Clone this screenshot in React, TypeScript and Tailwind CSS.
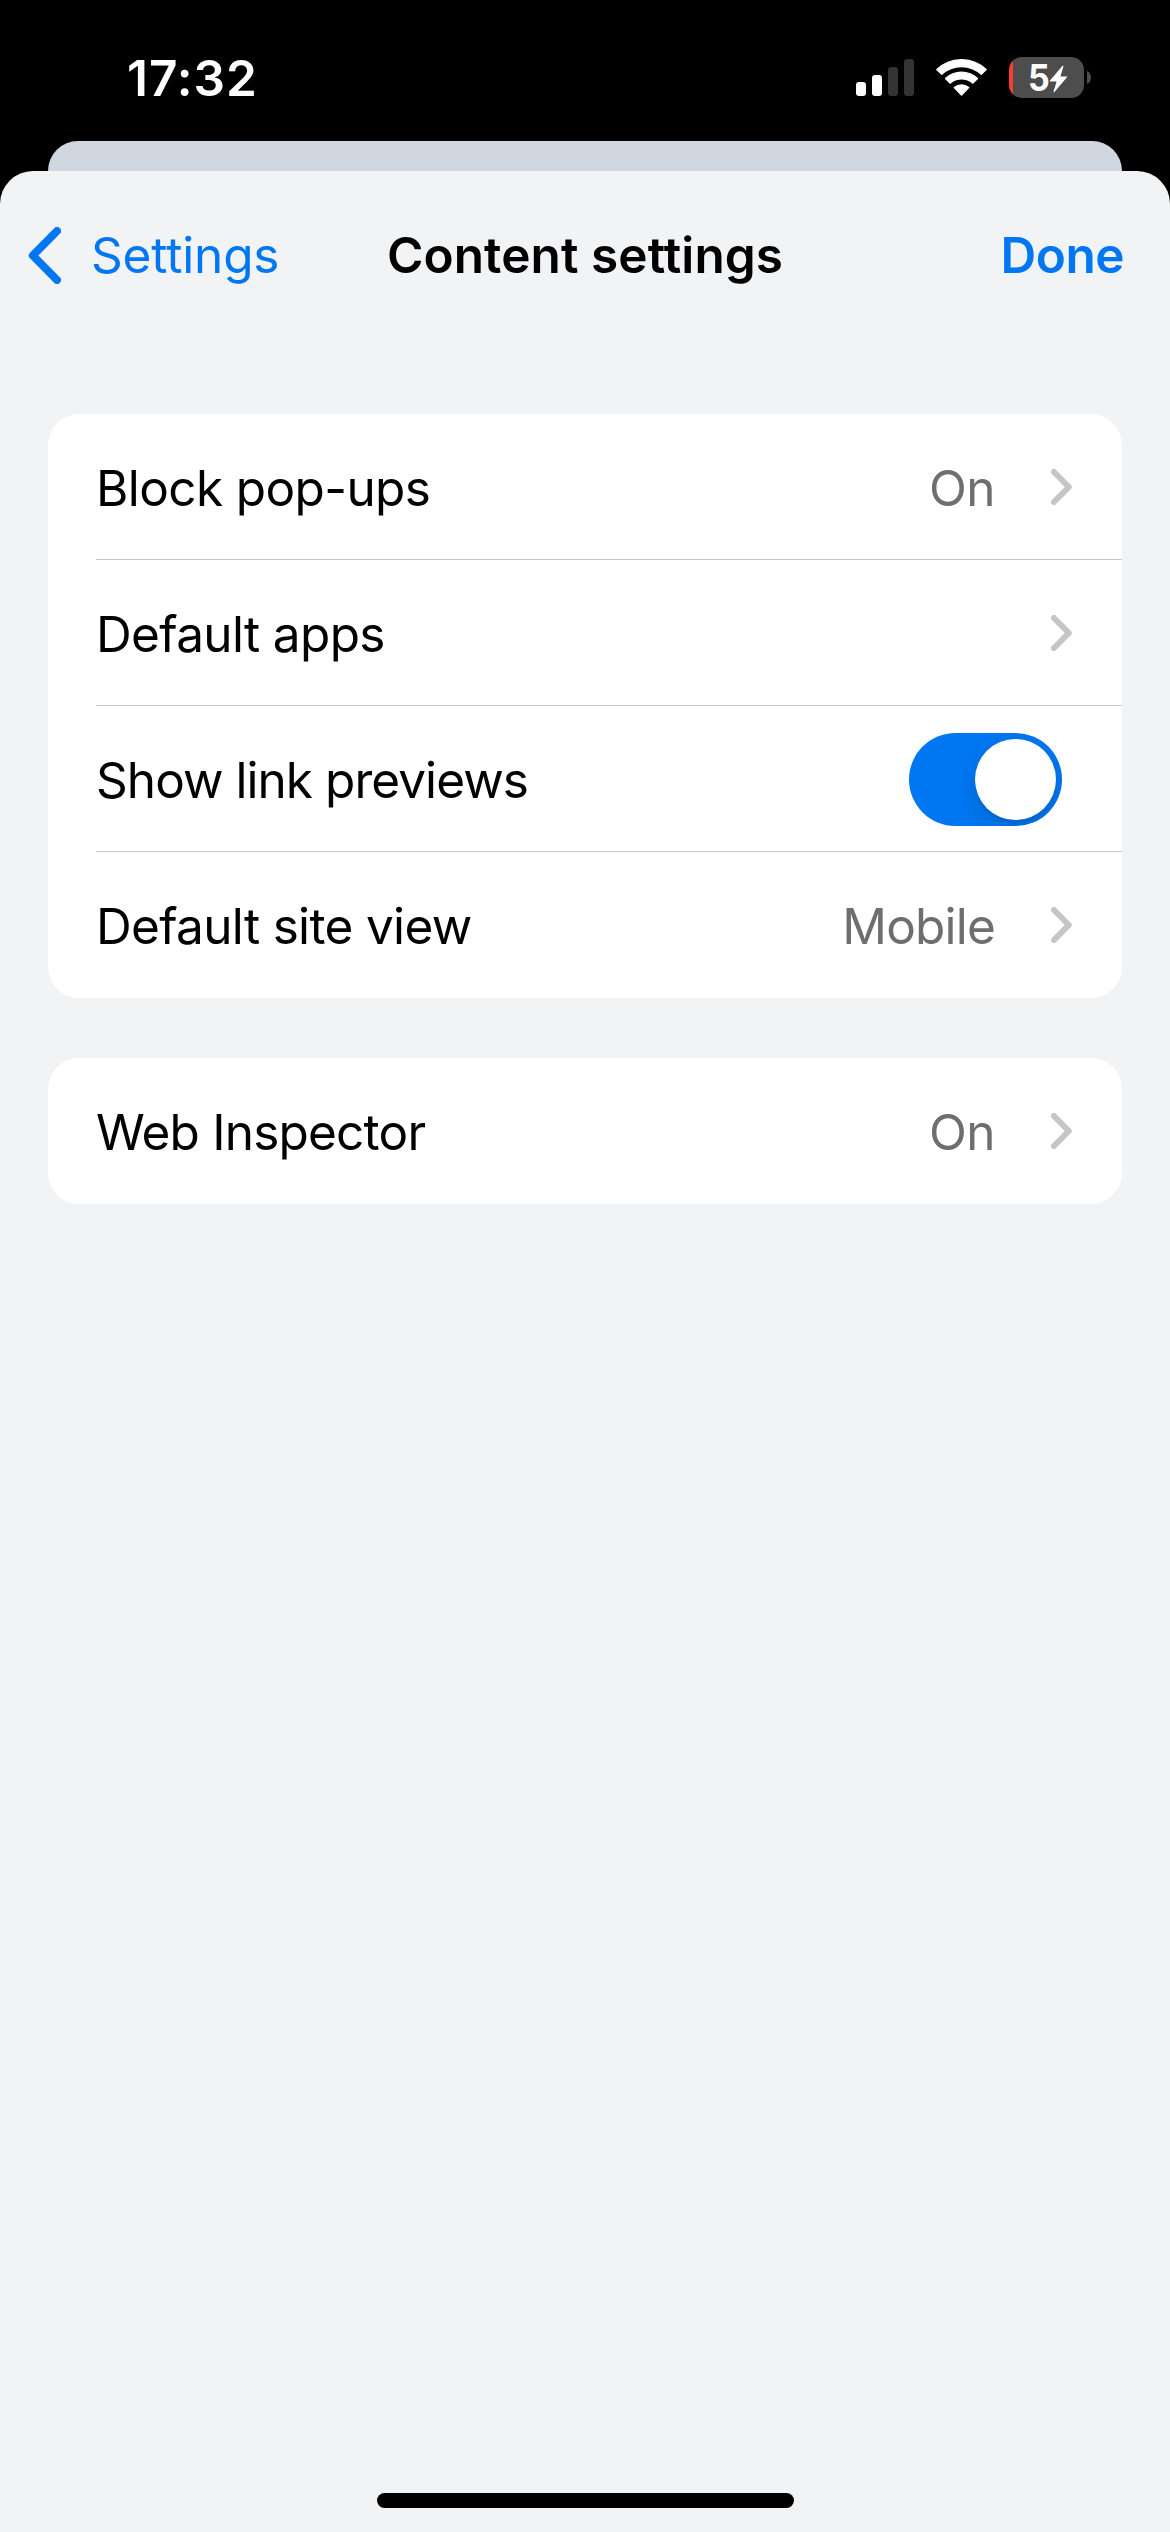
import type { ReactNode } from 'react'

function StatusBar() {
  return (
    <div className="flex h-[141px] items-start justify-between pl-[127px] pr-[79px] text-white">
      <span className="mt-[48px] text-[49.5px] leading-[60px] font-semibold tracking-[0.98px]">17:32</span>
      <div className="mt-[57px] flex h-[41px] items-start">
        <svg width="58" height="37" viewBox="0 0 58 37" className="mt-[2px]">
          <rect x="0" y="23" width="10" height="14" rx="3" fill="#fff" />
          <rect x="16" y="16" width="10" height="21" rx="3" fill="#fff" />
          <rect x="32" y="8" width="10" height="29" rx="3" fill="#333" />
          <rect x="48" y="0" width="10" height="37" rx="3" fill="#333" />
        </svg>
        <svg
          width="51"
          height="37"
          viewBox="0 0 51 37"
          className="mt-[2px] ml-[22px]"
          fill="#fff"
          stroke="#fff"
          strokeWidth="1.4"
          strokeLinejoin="round"
        >
          <path d="M.9 10.600A35.500 35.500 0 0 1 50.100 10.600L45.300 15.300A28.900 28.900 0 0 0 5.700 15.300z" />
          <path d="M9.500 19.500A23.300 23.300 0 0 1 41.500 19.500L36.900 24.100A17.500 17.500 0 0 0 14.100 24.100z" />
          <path d="M18.300 28.500A11.500 11.500 0 0 1 32.700 28.500L25.500 36z" />
        </svg>
        <div className="ml-[22px] flex h-[41px] w-[75px] items-center rounded-[13px] bg-linear-to-r from-[#ff3b30] from-[4px] to-[#4d4d4d] to-[4px] pl-[18.5px]">
          <span className="w-[21.5px] origin-left scale-x-92 text-[37px] leading-[41px] font-bold">5</span>
          <svg width="19" height="28" viewBox="0 0 19 28" className="mt-[2px] shrink-0">
            <path
              d="M13.300 .9L.8 15.800Q.4 16.500 1.200 16.500H7.600L4.500 26.600Q4.500 27.600 5.400 27L18 12.300Q18.500 11.500 17.600 11.400H11.400L14.500 1.300Q14.400 .3 13.300 .9z"
              fill="#fff"
            />
          </svg>
        </div>
        <svg width="4" height="13" viewBox="0 0 4 13" className="mt-[14px] ml-[3px]">
          <path d="M0 0C5.300 2 5.300 11 0 13z" fill="#4d4d4d" />
        </svg>
      </div>
    </div>
  )
}

function Chevron() {
  return (
    <svg width="21" height="36" viewBox="0 0 21 36" fill="none" className="ml-[56px] shrink-0">
      <path d="M3 3l14.800 15L3 33" stroke="#c5c5c7" strokeWidth="6" strokeLinecap="round" strokeLinejoin="round" />
    </svg>
  )
}

function Toggle() {
  return (
    <div className="mr-[10px] flex h-[93px] w-[153px] items-center justify-end overflow-hidden rounded-full bg-[#0077f2] p-[6px]">
      <div className="size-[81px] rounded-full bg-white shadow-[0_9px_24px_rgba(0,0,0,0.15),0_3px_3px_rgba(0,0,0,0.06)]" />
    </div>
  )
}

function Row({ label, tracking, last, children }: { label: string; tracking: string; last?: boolean; children: ReactNode }) {
  return (
    <div className="relative flex h-[146px] items-center pr-[50px] pl-[48px]">
      <span className={`mt-[2px] flex-1 whitespace-nowrap text-black ${tracking}`}>{label}</span>
      {children}
      {!last && <div className="absolute right-0 bottom-0 left-[48px] h-px bg-[#c6c6c8]" />}
    </div>
  )
}

function Value({ children, tracking }: { children: string; tracking: string }) {
  return <span className={`mt-[2px] text-[#6e6e70] ${tracking}`}>{children}</span>
}

export default function App() {
  return (
    <div className="flex h-[2532px] w-[1170px] flex-col overflow-hidden bg-black font-[Inter,sans-serif]">
      <StatusBar />
      <div className="mx-[48px] h-[30px] rounded-t-[30px] bg-[#d0d7e1]" />
      <div className="flex flex-1 flex-col rounded-t-[33px] bg-[#f1f3f5] text-[49.5px] leading-[60px]">
        <header className="grid h-[168px] grid-cols-[1fr_auto_1fr] items-center px-[28px] text-[#0077f2]">
          <div className="flex items-center">
            <svg width="33" height="57" viewBox="0 0 33 57" fill="none" className="mr-[30px]">
              <path d="M29 4L4.800 28.500L29 53" stroke="currentColor" strokeWidth="8" strokeLinecap="round" strokeLinejoin="round" />
            </svg>
            <span className="tracking-[-0.15px]">Settings</span>
          </div>
          <h1 className="font-semibold tracking-[0.1px] text-black">Content settings</h1>
          <span className="mr-[18px] justify-self-end font-semibold tracking-[-0.49px]">Done</span>
        </header>
        <main className="mt-[75px] flex flex-col gap-[60px] px-[48px]">
          <section className="rounded-[31px] bg-white">
            <Row label="Block pop-ups" tracking="tracking-[-0.61px]">
              <Value tracking="tracking-[-0.55px]">On</Value>
              <Chevron />
            </Row>
            <Row label="Default apps" tracking="tracking-[-0.65px]">
              <Chevron />
            </Row>
            <Row label="Show link previews" tracking="tracking-[-0.95px]">
              <Toggle />
            </Row>
            <Row label="Default site view" tracking="tracking-[-0.67px]" last>
              <Value tracking="tracking-[-0.8px]">Mobile</Value>
              <Chevron />
            </Row>
          </section>
          <section className="rounded-[31px] bg-white">
            <Row label="Web Inspector" tracking="tracking-[-0.79px]" last>
              <Value tracking="tracking-[-0.55px]">On</Value>
              <Chevron />
            </Row>
          </section>
        </main>
        <div className="mx-auto mt-auto mb-[24px] h-[15px] w-[417px] rounded-full bg-black" />
      </div>
    </div>
  )
}
